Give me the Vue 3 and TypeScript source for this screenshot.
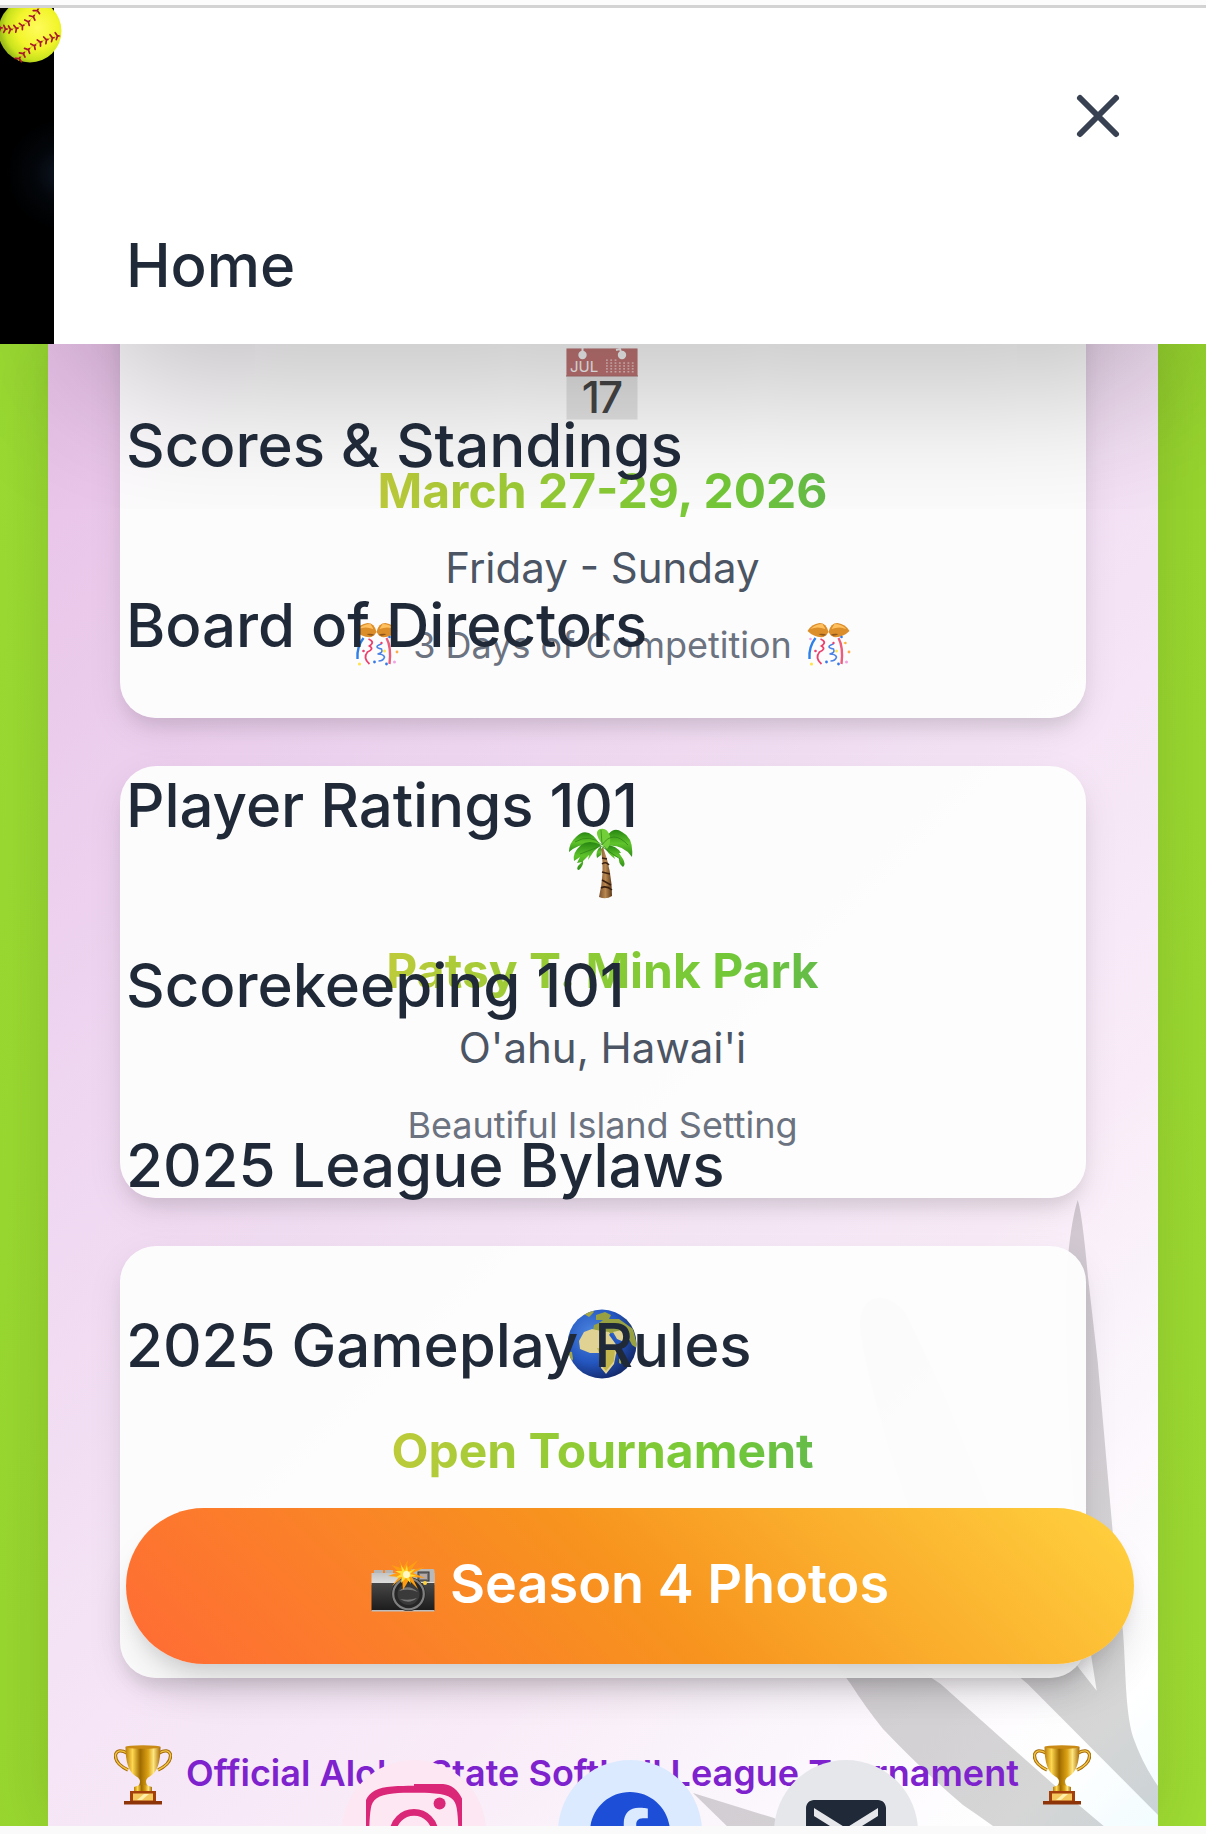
<script setup lang="ts">
interface EventCard {
  icon: 'calendar' | 'palm' | 'globe'
  title: string
  detail?: string
  note?: string
  festive?: boolean
}

const menu: string[] = [
  'Home',
  'Scores & Standings',
  'Board of Directors',
  'Player Ratings 101',
  'Scorekeeping 101',
  '2025 League Bylaws',
  '2025 Gameplay Rules',
]

const cards: EventCard[] = [
  { icon: 'calendar', title: 'March 27-29, 2026', detail: 'Friday - Sunday', note: '3 Days of Competition', festive: true },
  { icon: 'palm', title: 'Patsy T. Mink Park', detail: "O'ahu, Hawai'i", note: 'Beautiful Island Setting' },
  { icon: 'globe', title: 'Open Tournament' },
]

// month grid dots on the calendar page
const dots = Array.from({ length: 31 }, (_, i) => ({ x: 40 + (i % 7) * 4.3, y: 27 - Math.floor(i / 7) * 2.9 }))

// short stitches along both seams of the softball: x, y, angle
const stitches: number[][] = [
  [2, 29, -5], [7, 30, 5], [12, 30.500, 0], [18, 29.500, -12], [24, 27, -22], [30, 23, -35], [35, 18, -48], [39, 12, -60],
  [21, 60, -58], [25, 55, -50], [30, 51, -42], [36, 47, -34], [42, 43.500, -24], [48, 41, -14], [54, 39, -8], [59, 37, -5],
]
</script>

<template>
  <div class="page">
    <div class="strip top"></div>
    <div class="viewport">
      <header class="header">
        <div class="hero"></div>
        <div class="panel">
          <button class="close" aria-label="Close">
            <svg width="72" height="72" viewBox="0 0 24 24" fill="none" stroke="#374151" stroke-width="2" stroke-linecap="round"><path d="M6 18L18 6M6 6l12 12" /></svg>
          </button>
          <nav class="menu">
            <a v-for="item in menu" :key="item">{{ item }}</a>
          </nav>
          <div class="cta">
            <svg class="camera" width="64" height="54" viewBox="0 0 64 54">
              <defs>
                <linearGradient id="silver" x1="0" y1="0" x2="0" y2="1"><stop offset="0" stop-color="#c4c4c4" /><stop offset="1" stop-color="#e4e4e4" /></linearGradient>
                <linearGradient id="leather" x1="0" y1="0" x2="0" y2="1"><stop offset="0" stop-color="#474747" /><stop offset="1" stop-color="#1b1b1b" /></linearGradient>
              </defs>
              <path d="M3 11h9v5H3zM14 11h8v5h-8z" fill="#b5b5b5" />
              <rect x="0.500" y="14" width="63" height="12" fill="url(#silver)" />
              <path d="M38 10h24q1.500 0 1.500 2v11H42z" fill="#b9b9b9" />
              <rect x="0.500" y="24" width="63" height="28" fill="url(#leather)" />
              <rect x="0.500" y="51" width="63" height="1.500" fill="#bdbdbd" />
              <rect x="47" y="13" width="11" height="9" fill="#777" stroke="#333" />
              <rect x="49" y="15" width="7" height="5" fill="#b5a8a5" />
              <circle cx="37.500" cy="35" r="17" fill="#222" />
              <circle cx="37.500" cy="35" r="15.300" fill="#262626" stroke="#808080" stroke-width="2.200" />
              <circle cx="37.500" cy="35" r="11" fill="#3a3a3a" />
              <path d="M28 32q9-8 19 1-9-4-19-1zM29 40q9 6 17-1-8 3-17 1z" fill="#777" />
              <path d="M28 0l4 9 5-8-1 8 11-8-7 10 14-3-12 6 12 5-13-1 6 12-9-9-6 10-1-12-10 8 7-9-11-1 11-4-8-7 10 3z" fill="#ff9d12" />
              <path d="M30 6l4 6 2-6 1 7 7-3-5 5 7 2-8 1 2 7-5-6-5 5 1-6-7 1 6-4-6-3 7 0z" fill="#ffdf37" />
              <circle cx="35.500" cy="15.500" r="3.500" fill="#fff8c4" />
              <circle cx="54" cy="24" r="2" fill="#ffd43b" />
            </svg>
            <span>Season 4 Photos</span>
          </div>
          <div class="social">
            <a class="round pink">
              <svg width="96" height="96" viewBox="0 0 24 24">
                <path d="M12 0h7.300C21.300.1 23 1.500 24 3.600v17q-1 2.800-4 3.400H4Q1 23 0 20.500V4C.8 2 3 .8 6.500.6 8.500.5 10 .45 12 .45zM12 2.200c-2 0-3.500 0-5.200.2C3 2.700 1.500 4 1.200 6.200.7 9 .7 15.500 1.200 18.200c.4 2.400 1.800 3.800 5.600 4 3 .2 7.500.2 10.400 0 3.800-.2 5.200-1.600 5.500-4 .5-2.700.5-9.200 0-12-.3-2.300-1.700-3.600-5.500-3.800-1.700-.2-3.200-.2-5.200-.2z" fill="#db2777" fill-rule="evenodd" />
                <circle cx="12" cy="12.400" r="5.300" fill="none" stroke="#db2777" stroke-width="1.650" />
                <circle cx="18.400" cy="4.900" r="1.500" fill="#db2777" />
              </svg>
            </a>
            <a class="round blue">
              <svg width="96" height="96" viewBox="0 0 24 24" fill="#1d4ed8"><path d="M22 12c0-5.523-4.477-10-10-10S2 6.477 2 12c0 4.991 3.657 9.128 8.438 9.878v-6.987h-2.540V12h2.540V9.797c0-2.506 1.492-3.890 3.777-3.890 1.094 0 2.238.195 2.238.195v2.460h-1.260c-1.243 0-1.630.771-1.630 1.562V12h2.773l-.443 2.890h-2.330v6.988C18.343 21.128 22 16.991 22 12z" /></svg>
            </a>
            <a class="round gray">
              <svg width="96" height="96" viewBox="0 0 24 24" fill="#1f2937"><path d="M20 4H4c-1.100 0-1.990.9-1.990 2L2 18c0 1.100.9 2 2 2h16c1.100 0 2-.9 2-2V6c0-1.100-.9-2-2-2zm0 4l-8 5-8-5V6l8 5 8-5v2z" /></svg>
            </a>
          </div>
        </div>
        <svg class="softball" width="64" height="64" viewBox="0 0 64 64">
          <defs>
            <radialGradient id="felt" cx=".62" cy=".45" r=".6"><stop offset="0" stop-color="#fffb5c" /><stop offset=".55" stop-color="#f2f52b" /><stop offset=".85" stop-color="#c9e31d" /><stop offset="1" stop-color="#9fbd1a" /></radialGradient>
          </defs>
          <circle cx="32" cy="32" r="31.500" fill="url(#felt)" />
          <g fill="none" stroke="#c8a820" stroke-width=".8">
            <path d="M1 28q25 8 41-20M20 62q14-22 43-25" />
          </g>
          <g stroke="#a8182a" stroke-width="1.700" stroke-linecap="round" fill="none">
            <path v-for="(s, i) in stitches" :key="i" :transform="`translate(${s[0]} ${s[1]}) rotate(${s[2]})`" d="M-1.500-3.500L.5 0-1 3.500M.5 0h1.500" />
          </g>
        </svg>
      </header>

      <main class="main">
        <section class="sheet">
          <svg class="leaf" width="1110" height="1482" viewBox="48 344 1110 1482" fill="#000" fill-opacity=".16">
            <path d="M1077.700 1200C1073 1215 1069 1240 1067 1270C1064 1340 1070 1520 1092 1661L1096.700 1690.700L1080 1669.600C1045 1620 1010 1560 991 1509C970 1460 940 1380 905 1312C880 1285 858 1300 860 1328C865 1370 885 1440 910 1509C940 1590 980 1645 1027.700 1684L1158 1815V1786Q1143 1765 1133 1737C1125 1710 1126 1670 1123 1632L1113 1535L1097.700 1361.500L1088 1277Q1082 1212 1077.700 1200z" />
            <path d="M780 1560C798 1610 826 1650 850.700 1684Q866 1708 883 1729Q925 1773 963 1805Q985 1820 1004 1834H1113Q1083 1808 1053 1784L1000 1737L940.700 1684Q850 1625 780 1560z" />
            <path d="M693 1793L735 1834H800L774 1818z" />
          </svg>

          <div class="cards">
            <article v-for="card in cards" :key="card.title" class="card">
              <svg v-if="card.icon === 'calendar'" class="emoji" width="72" height="72" viewBox="0 0 72 72">
                <rect x=".5" y=".5" width="71" height="71" fill="#e2e2e2" />
                <rect x=".5" y=".5" width="71" height="27.500" fill="#be7373" />
                <path d="M0 28h72" stroke="#a87070" />
                <g fill="#f4f4f4"><circle cx="16.500" cy="7" r="4.200" /><circle cx="56" cy="7" r="4.200" /></g>
                <path d="M16.500 0v7M50 2l4-1 2 6" stroke="#f4f4f4" stroke-width="2" fill="none" />
                <text x="4" y="24" class="month">JUL</text>
                <g fill="#e0bfbe"><rect v-for="(d, i) in dots" :key="i" :x="d.x" :y="d.y - 4" width="1.800" height="1.500" /></g>
                <text x="35.500" y="65" text-anchor="middle" class="day">17</text>
              </svg>
              <svg v-else-if="card.icon === 'palm'" class="emoji" width="72" height="72" viewBox="0 0 72 72">
                <defs>
                  <linearGradient id="trunk"><stop offset="0" stop-color="#7a5030" /><stop offset=".5" stop-color="#b88850" /><stop offset="1" stop-color="#5c3719" /></linearGradient>
                  <linearGradient id="frond" x1="0" y1="0" x2="0" y2="1"><stop offset="0" stop-color="#268611" /><stop offset=".5" stop-color="#5fc42b" /><stop offset="1" stop-color="#318f18" /></linearGradient>
                </defs>
                <path d="M37 19q9 24 9 49-6 4-13 1 6-25 2-48z" fill="url(#trunk)" />
                <path d="M36 30l5 1M36 36q4-3 7 1M36 44l8 2M36 52l9 5M35 60q5-3 11 2" stroke="#3c210f" stroke-width="1.500" fill="none" />
                <g fill="url(#frond)">
                  <path d="M35 18Q22-4 10 9 3 15 3 24q14-12 32-6z" />
                  <path d="M37 18Q44-4 56 4q12 6 10 25-9-14-29-11z" />
                  <path d="M35 17Q23 11 15 17 6 25 8 33l6-4-3 6 5-1-4 4q-2 4 1 4 5-5 4-9l6-6-1 5 6-9z" />
                  <path d="M37 17q13-1 18 8l-2 0 4 6q3 5 0 8-5-4-4-9l-5-2 1 3q-7-5-12-14z" />
                  <path d="M36 16Q27 4 34 1q7-2 10 7 1 9-3 13l-3-3v4z" fill="#72cf3a" />
                  <path d="M35 18q-6 5-4 12l4-3z" />
                </g>
                <path d="M9 14Q24 5 36 17 47 1 62 17M14 26L35 18l19 13M35 2l1 14" stroke="#2b8015" stroke-width=".7" fill="none" />
              </svg>
              <svg v-else class="emoji" width="72" height="72" viewBox="0 0 72 72">
                <defs>
                  <radialGradient id="sea" cx=".35" cy=".35" r=".7"><stop offset="0" stop-color="#4c86e0" /><stop offset=".6" stop-color="#2456bf" /><stop offset="1" stop-color="#142a6b" /></radialGradient>
                  <clipPath id="disc"><circle cx="36" cy="36" r="34.500" /></clipPath>
                </defs>
                <circle cx="36" cy="36" r="34.500" fill="url(#sea)" />
                <g clip-path="url(#disc)">
                  <path d="M30 7l9-3 6 3-2 4 10 0 14 10 5 20-6-4-4-8-7 0-5-5-8 2-4-4-4 4-5-1-6 2-2-4 6-1 1-5 5-2 4-3-7 0z" fill="#97a142" />
                  <path d="M47 24l9-2 7 4 1 6-6 2-7-3z" fill="#e0d293" />
                  <path d="M18 24l8-3 9 2 8 1 6 10 5 5-4 7-2 10-8 10-5-6-2-15-9 0-10-4-1-8z" fill="#e0d293" />
                  <path d="M31 40l18 1-1 12-8 10-5-6-2-12z" fill="#c2b64c" />
                  <path d="M44 26l8 11" stroke="#2456bf" stroke-width="2.500" fill="none" />
                  <path d="M1 43l5 1 1 7-3 6zM53 51l3-2-1 7-2-1zM18 6l8-4 2 2-5 5z" fill="#a5a744" />
                  <path d="M45 0q17 9 25 28l2-28z" fill="#3f4a22" opacity=".45" />
                </g>
              </svg>
              <h3>{{ card.title }}</h3>
              <p v-if="card.detail" class="detail">{{ card.detail }}</p>
              <p v-if="card.note" class="note">
                <template v-for="side in 2" :key="side">
                  <svg v-if="card.festive" class="confetti" width="45" height="44" viewBox="0 0 44 44" :style="{ order: side === 1 ? 0 : 2 }">
                    <path d="M1 8Q5 1 13 0q7 0 9 9-2 4-5 5Q8 15 1 8z" fill="#dc8e2a" />
                    <path d="M43 8Q39 1 31 0q-7 0-9 9 2 4 5 5 9 1 16-6z" fill="#dc8e2a" />
                    <path d="M4 6Q9 1 16 1l3 5Q11 3 4 6zM40 6Q35 1 28 1l-3 5q8-3 15 0z" fill="#ffc060" />
                    <path d="M12 11q5-1 8 1-4 2-8-1zM32 11q-5-1-8 1 4 2 8-1z" fill="#8f571d" />
                    <path d="M9 15Q2 24 3 36" stroke="#2e7fe8" stroke-width="2.400" fill="none" />
                    <path d="M32 15q5 9 3 26" stroke="#ec5c7b" stroke-width="2.400" fill="none" />
                    <path d="M14 16q7 3 1 7 5 3-2 6-5 6 2 12" stroke="#ea416c" stroke-width="1.800" fill="none" />
                    <path d="M27 21q-9 3 0 5 2 4-4 5 6 0 7 3-1 4-6 4" stroke="#4b83e5" stroke-width="1.600" fill="none" />
                    <g fill="#ffe34d"><circle cx="5" cy="41" r="1.600" /><circle cx="30" cy="28" r="1.500" /><circle cx="38" cy="20" r="1" /></g>
                    <g fill="#3579e8"><circle cx="20" cy="39" r="1.400" /><circle cx="32" cy="41" r="1.400" /><circle cx="35" cy="14" r="1.300" /></g>
                    <g fill="#ffad4b"><circle cx="42.500" cy="29" r="1.400" /><circle cx="39" cy="20" r="1.200" /></g>
                    <g fill="#f3a2e1"><circle cx="40" cy="39" r="1.500" /><circle cx="4" cy="16" r="1.300" /></g>
                    <g fill="#ed3f71"><circle cx="9" cy="28" r="1.300" /><circle cx="27" cy="20" r="1.200" /></g>
                  </svg>
                </template>
                <span>{{ card.note }}</span>
              </p>
            </article>
          </div>

          <div class="official">
            <svg v-for="n in 2" :key="n" width="58" height="60" viewBox="0 0 58 60" :style="{ order: n === 1 ? 0 : 2 }">
              <defs>
                <linearGradient :id="`gold${n}`"><stop offset="0" stop-color="#b77b08" /><stop offset=".2" stop-color="#ffd850" /><stop offset=".42" stop-color="#9f6a00" /><stop offset=".65" stop-color="#dca315" /><stop offset=".8" stop-color="#ffe681" /><stop offset="1" stop-color="#a66a05" /></linearGradient>
              </defs>
              <path d="M13 8Q4 3 1.500 9.500q-1 9 12.500 15.500M45 8q9-5 11.500 1.500Q57.500 18.500 44 25" fill="none" stroke="#a46b0b" stroke-width="3.400" />
              <path d="M13 8Q4 3 1.500 9.500q-1 9 12.500 15.500M45 8q9-5 11.500 1.500Q57.500 18.500 44 25" fill="none" stroke="#f3c543" stroke-width="1.400" />
              <path d="M11.500 2h35q0 23-10 29-4 2-4.500 5 0 4 3.500 7v5h-13v-5q3.500-3 3.500-7-.5-3-4.500-5-10-6-10-29z" :fill="`url(#gold${n})`" />
              <ellipse cx="29" cy="2" rx="17.500" ry="1.700" fill="#c98b16" />
              <path d="M20 42q9-4 18 0v4H20z" :fill="`url(#gold${n})`" />
              <path d="M16 46h26v10H16z" fill="#a3400c" />
              <path d="M10 56h38v3.500H10z" fill="#8d3409" />
              <path d="M19 48.500h20v7H19z" fill="#f4c85c" />
              <path d="M23 55l7-6h5l-7 6z" fill="#fff0ac" />
            </svg>
            <span>Official Aloha State Softball League Tournament</span>
          </div>
        </section>
      </main>
    </div>
    <div class="strip bottom"></div>
  </div>
</template>

<style>
body {
  margin: 0;
  overflow: hidden;
}
</style>

<style scoped>
.page {
  width: 1206px;
  height: 1834px;
  overflow: hidden;
  font-family: Inter, "Liberation Sans", sans-serif;
}
.strip {
  box-sizing: border-box;
  height: 8px;
  background: #fcfcfc;
}
.strip.top {
  border-bottom: 3px solid #d3d3d3;
}
.strip.bottom {
  background: #fafafa;
}
.viewport {
  height: 1818px;
  overflow: hidden;
}
.header {
  position: relative;
  z-index: 2;
  display: flex;
  height: 336px;
}
.hero {
  width: 54px;
  background: radial-gradient(circle at 62px 166px, #0f1726 0, #04070b 28px, #000 60px);
}
.panel {
  display: flex;
  flex-direction: column;
  width: 1152px;
  height: 336px;
  box-sizing: border-box;
  padding: 72px 72px 0;
  background: #fff;
  box-shadow: 0 75px 150px -36px rgba(0, 0, 0, 0.25);
}
.softball {
  position: absolute;
  left: -2px;
  top: -9px;
  clip-path: inset(9px 0 0 0);
}
.close {
  align-self: flex-end;
  flex: none;
  width: 72px;
  height: 72px;
  padding: 0;
  border: 0;
  background: none;
}
.close svg {
  display: block;
}
.menu {
  display: flex;
  flex-direction: column;
  flex: none;
  margin-top: 23px;
}
.menu a {
  height: 180px;
  line-height: 180px;
  font-size: 60px;
  font-weight: 500;
  letter-spacing: -0.06px;
  color: #1f2937;
  white-space: nowrap;
}
.cta {
  display: flex;
  flex: none;
  align-items: center;
  justify-content: center;
  gap: 15px;
  height: 156px;
  margin-top: 73px;
  border-radius: 78px;
  background: linear-gradient(45deg, #ff6b35 0%, #f7931e 50%, #ffd23f 100%);
  box-shadow: 0 30px 45px -9px rgba(0, 0, 0, 0.12), 0 12px 18px -6px rgba(0, 0, 0, 0.1);
  color: #fff;
  font-size: 54px;
  font-weight: 600;
}
.cta span {
  line-height: 66px;
  padding-bottom: 4px;
}
.social {
  display: flex;
  flex: none;
  justify-content: center;
  gap: 72px;
  margin-top: 96px;
}
.round {
  display: flex;
  align-items: center;
  justify-content: center;
  width: 144px;
  height: 144px;
  border-radius: 50%;
}
.pink {
  background: #fce7f3;
}
.blue {
  background: #dbeafe;
}
.gray {
  background: #e5e7eb;
}
.main {
  display: flex;
  justify-content: center;
  height: 1482px;
  background: linear-gradient(135deg, #9bdb33, #98d62f 50%, #9edb33);
  overflow: hidden;
}
.sheet {
  position: relative;
  width: 1110px;
  height: 1482px;
  background: linear-gradient(135deg, #e5bfe6 0%, #e9c6ea 7%, #efd7f1 31.6%, #f5e5f6 55%, #f9ecf8 70.5%, #faf3fb 79%, #fff 94%, #f2fcff 100%);
  box-shadow: 0 0 60px rgba(0, 0, 0, 0.12);
}
.leaf {
  position: absolute;
  inset: 0;
}
.cards {
  position: relative;
  display: flex;
  flex-direction: column;
  gap: 48px;
  margin: -58px 72px 0;
}
.card {
  display: flex;
  flex-direction: column;
  align-items: center;
  box-sizing: border-box;
  height: 432px;
  padding-top: 62px;
  border-radius: 36px;
  background: rgba(253, 253, 253, 0.97);
  box-shadow: 0 12px 36px rgba(0, 0, 0, 0.08), 0 12px 18px -6px rgba(0, 0, 0, 0.1);
}
.emoji {
  flex: none;
  margin-right: 2px;
}
.month {
  font-size: 15px;
  fill: #f4f4f4;
}
.day {
  font-size: 44px;
  font-weight: 500;
  letter-spacing: -2px;
  fill: #454545;
}
h3 {
  margin: 35px 1px 9px 0;
  background: linear-gradient(100deg, #bfcb3a, #8ecb35 45%, #72c838 78%, #64bb4a);
  -webkit-background-clip: text;
  background-clip: text;
  color: transparent;
  font-size: 48px;
  font-weight: 700;
  line-height: 72px;
}
.detail {
  margin: 0 1px 22px 0;
  color: #4b5563;
  font-size: 42px;
  line-height: 63px;
}
.note {
  display: flex;
  align-items: center;
  gap: 14px;
  margin: 0 1px 0 0;
  color: #6b7280;
  font-size: 36px;
  line-height: 48px;
}
.note span,
.official span {
  order: 1;
}
.official span {
  position: relative;
  top: 1px;
}
.official {
  position: relative;
  display: flex;
  justify-content: center;
  gap: 14px;
  margin: 67px 1px 0 0;
  color: #7e22ce;
  font-size: 36px;
  font-weight: 600;
  line-height: 54px;
  white-space: nowrap;
}
</style>
